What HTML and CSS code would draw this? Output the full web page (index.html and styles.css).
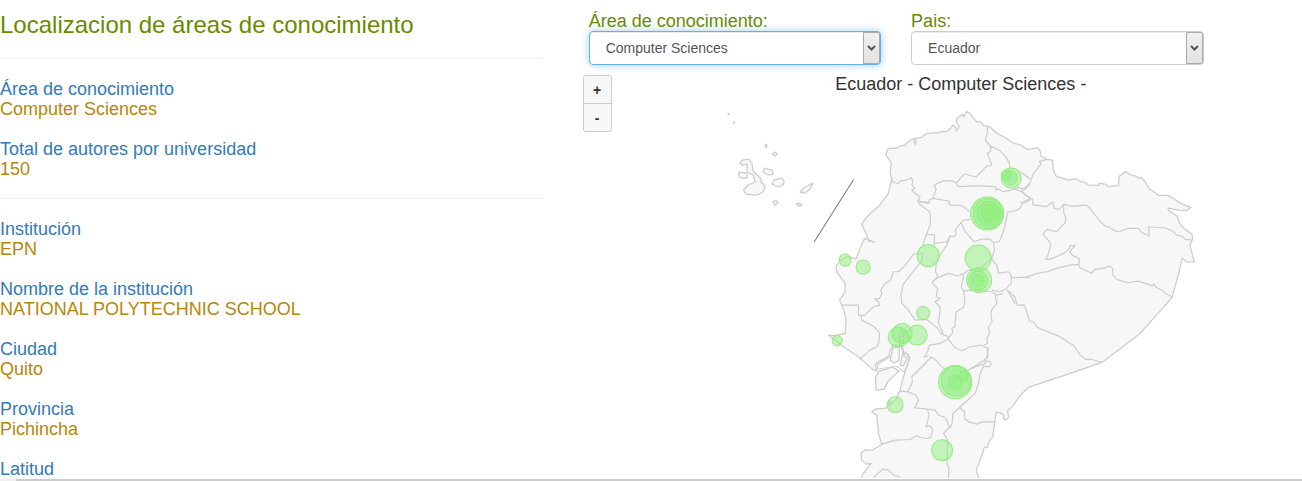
FILE: index.html
```html
<!DOCTYPE html>
<html lang="es">
<head>
<meta charset="utf-8">
<title>Localizacion de áreas de conocimiento</title>
<link rel="stylesheet" href="styles.css">
</head>
<body>
<main class="page">
  <section class="info">
    <h1 class="info-title">Localizacion de áreas de conocimiento</h1>
    <hr class="rule">
    <dl class="facts">
      <div><dt>Área de conocimiento</dt><dd>Computer Sciences</dd></div>
      <div><dt>Total de autores por universidad</dt><dd>150</dd></div>
    </dl>
    <hr class="rule">
    <dl class="facts">
      <div><dt>Institución</dt><dd>EPN</dd></div>
      <div><dt>Nombre de la institución</dt><dd>NATIONAL POLYTECHNIC SCHOOL</dd></div>
      <div><dt>Ciudad</dt><dd>Quito</dd></div>
      <div><dt>Provincia</dt><dd>Pichincha</dd></div>
      <div><dt>Latitud</dt></div>
    </dl>
  </section>

  <section class="explorer">
    <form class="filters">
      <div class="field">
        <label for="area">Área de conocimiento:</label>
        <div class="picker picker-active">
          <select id="area"><option>Computer Sciences</option></select>
          <span class="picker-arrow"><svg width="9" height="7" viewBox="0 0 9 7"><path d="M1 1l3.500 3.500L8 1"/></svg></span>
        </div>
      </div>
      <div class="field">
        <label for="country">Pais:</label>
        <div class="picker">
          <select id="country"><option>Ecuador</option></select>
          <span class="picker-arrow"><svg width="9" height="7" viewBox="0 0 9 7"><path d="M1 1l3.500 3.500L8 1"/></svg></span>
        </div>
      </div>
    </form>

    <div class="map">
      <div class="zoom">
        <button type="button" aria-label="Acercar">+</button>
        <button type="button" aria-label="Alejar">-</button>
      </div>
      <h2 class="map-title">Ecuador - Computer Sciences -</h2>
      <svg class="map-canvas" viewBox="583 94 719 384" role="img" aria-label="Mapa de Ecuador">
        <!-- mainland -->
        <path class="land" d="M890 148.3L896.7 148.3 900 146 905 145 909 141 914 138.5 921.7 137.3 926.7 133.3 938.3 132.7 941 131.5 946.7 131.7 951 127.7 952.7 125 955.7 128 956.3 131 959 126.7 956 121.7 957.3 118 962.7 114.3 963.5 117 966.7 111.3 970.7 114.3 973 118 976 121.3 980.7 122 983.3 125.7 987.7 126 991 128 996.7 133.3 1005 137.7 1013.3 143.3 1020 144.7 1026.7 149.3 1031 148.8 1037.3 147.6 1040 150.7 1040.7 155.7 1046.7 159.3 1052.3 160 1053.3 170.7 1056 176 1062 178 1068.3 180 1075.7 178.5 1080 181.7 1084 182 1088.3 185 1098.3 185.3 1099 183 1105 184 1108.3 186.7 1118.3 185.3 1119 176 1121.7 174.5 1125.3 171.5 1130 174.7 1136 176 1138 178 1141.3 177.7 1145 182 1149.3 188.7 1158.3 195.3 1167.3 195.3 1174 199 1180 203.3 1190.7 207.3 1186.7 210.3 1178.3 210 1167.7 208 1168.7 211 1176.7 216 1179 222 1181.7 226.7 1188.3 231.7 1192 235 1192.3 239.3 1189.7 245 1192 254 1194 261.7 1186.7 262 1182 258.3 1178 275 1171.7 297.5 1139.3 334 1101.7 362.3 1065 375 1040 383.3 1028.3 387.3 1020 395 1013.3 405 1007.3 411 1008.7 416.7 1005.7 419.7 1003 418.5 1003.7 415 1000 412.5 996 412.3 994.7 421.7 993 433 992.7 436.7 989 441 987.3 447 984 447.3 982.3 453.3 979.3 461.7 976 470 978.3 477V484H862V475L871 463.3 866.7 464 861.3 460 861 452.7 865 449.7 871.7 450.3 881.7 444 878.3 433.3 876.7 415 871.7 411.7 875 409 886.7 407.7 889 400 891 403 896 399 900 390 902 381 905 371.7 909.5 358 908 354 905 353 904 356 902.5 346 899 345 893 345 890 350 889 356 876.7 363 875 366 877 371 872 369 858.3 356.7 843.3 346.7 832 338 828.3 335 835 335.5 845 333.3 846 320 844 311 840.7 303.3 839.5 300 845 291.7 845 283.3 841 278 836.7 271.7 836 266 841 260 846.7 256.7 851 257.5 856 258.7 860 248.3 864.3 238.3 874 242 868.3 240.7 865.7 232.7 861.7 224.3 865 219 870 213.3 878.3 206.7 888.3 193.3 891.7 178.3 890 172 891 163 886 155 887.5 149Z"/>

        <!-- gulf channels and islands -->
        <path class="water" d="M909 359L905 352 903 357 901 346 898 347 898 352 894 354 890 357 878 364 877 369 897 366 904 372Z"/>
        <path class="land" d="M899 371L892 367 879 371 875.5 377 876 390 884 389 888 381Z"/>
        <path class="land" d="M891 356L890 360 894 363 899 360 899 347 893 347ZM902 355L905 356 907 359 903 366 900 365Z"/>
        <path class="land" d="M740 163L742 160 749 159 752 164 753 171 761 179 761 182 765 186 763 192 757 195 746 194 743.500 190 748 185 755 182 753 175 747 172 747 164 742 165Z"/>
        <path class="land" d="M739 172L747 173 747 178 741 178 738.500 175ZM764 168L772 170 773 174 768 175 763 172ZM774 180L781 178 784 181 783 185 778 187 772 184ZM800 192L805 187 813 183 810 189 805 193ZM772 154L775 152 777 154 775 156ZM773 202L776 200 778 203 775 205ZM796 204L799 203 802 205 799 206ZM765 144L767 145 766 148Z"/>
        <path class="land" d="M728 113.500h1v1h-1zM733.500 122h1v1h-1z"/>

        <!-- northern provinces -->
        <g class="border" transform="translate(850 100) scale(.33333)">
          <path d="M190 115L196 135 197 118M124 238L130 246 145 251 150 243 168 240 184 233 188 245 185 255 195 265 185 270 198 283 210 290 203 303 235 310 238 300 248 295 258 268 252 258 262 250 280 242 310 243 318 250 342 222 378 231 408 200 425 195 412 160 421 154 422 138M412 78L411 100 405 120 421 138 450 152 468 172 478 190 479 205M318 252L325 260 380 257 435 260 438 270 442 266 460 275 475 272 505 262 525 268 540 250M490 265L515 275 528 287 540 292"/>
        </g>
        <!-- central highlands -->
        <g class="border" transform="translate(900 190) scale(.33333)">
          <path d="M100 25L147 33 148 45 183 46 210 65M210 88L190 90 183 97 165 120 168 132 160 140 150 138 140 155 115 158 102 162 103 135 80 133M53 33L65 35 90 38M53 33L58 42 88 65 91 75 90 105 78 135 68 165M183 97L195 125 222 155 245 147 270 147 280 158 297 155 310 125 320 80 322 66 345 62 360 55 365 42 390 30M280 158L283 180 275 205 235 240M275 207L290 225 295 250 325 245 334 258 333 280 315 298 300 305 275 300M150 138L140 165 118 198 108 220 106 245 112 257M95 275L115 262 145 250 170 257 190 252 205 240 235 240M190 255L188 270 183 290 190 303 215 300 275 305 290 315 310 310M334 262L390 263M320 298L345 340"/>
        </g>
        <!-- Amazon provinces -->
        <g class="border" transform="translate(1020 130) scale(.33333)">
          <path d="M80 88L58 94 62 102 40 130 33 148 28 160 5 185 30 205 38 208 38 224 78 230 98 216 102 235 117 238 131 222 130 245 137 265 133 280 120 292 110 305 80 298 68 313 88 335 91 345 85 370 77 388 90 388 130 370 145 358 150 347 165 346 148 365 160 378 178 386 176 403 180 414 215 430 222 418 245 415 270 408 277 415 278 435 290 448 320 458 355 453 385 463 395 468 400 462 410 473 430 482 435 490 455 500M131 222L155 228 195 225 205 230 240 275 257 290 265 290 280 300 295 305 325 295 355 295 362 305 370 310 387 318 385 290 420 293 435 293 460 305 468 315 485 318 495 328 517 330M0 442L18 442 50 430 80 425 110 415 150 405 175 403M0 125L30 147M30 207L0 218"/>
        </g>
        <g class="border" transform="translate(980 210) scale(.33333)">
          <path d="M87 243L103 260 112 285 133 285 148 332 162 338 172 352 235 378 282 408 300 435 318 448 335 448 365 457"/>
        </g>
        <!-- coastal provinces -->
        <g class="border" transform="translate(820 220) scale(.33333)">
          <path d="M308 100L280 103 255 135 235 155 219 155 212 180 195 190 182 210 185 222 178 235 163 237 175 245 178 255 160 260 133 286 115 285 115 255 65 255M122 286L124 300 160 318 178 338 177 365 170 380 150 390 118 418M308 100L306 120 270 165 248 195 243 225 245 250 265 270 285 300 320 298 350 322 365 342 383 349 383 360M335 187L352 205 348 230 360 235 345 245 360 262 355 310 368 335 366 345M335 187L354 168M430 208L434 245 430 262 408 275 404 320 395 325 398 338 383 355M383 357L360 370 328 375 322 395 312 410 325 408M383 355L405 383 425 392 450 380 485 375M525 225L530 250 515 268 512 282 516 305 505 320 508 340 500 355 502 370 488 377 503 385 503 410 493 420M245 320L238 345 243 380M262 318L248 335 250 370M260 330L250 350"/>
        </g>
        <!-- southern provinces -->
        <g class="border" transform="translate(820 330) scale(.33333)">
          <path d="M330 80L345 88 375 120M335 80L275 140 277 155 263 185 240 182M263 185L287 195 295 210 283 233 315 236 345 240 355 255 375 262 382 275 387 292 370 310 383 330 380 400 386 412 385 442M503 52L500 85 470 105 445 120M455 115L470 108 495 100 495 92 510 95 513 102 508 110 490 108 482 125 472 170 465 190 418 232M418 232L398 250 396 280 388 295M418 232L433 245 433 265 445 275 470 282 485 275 525 275M321 236L327 255 318 290 330 287 338 298 332 320 325 325 300 322 290 317 270 328 225 330 185 342M160 442L188 417 205 420 220 435 240 440M203 215L208 228 218 218"/>
        </g>

        <path class="inset" d="M853.500 179.500L814 242"/>

        <g class="bubble">
          <circle cx="1011" cy="178" r="10"/><circle cx="1006" cy="175" r="5"/><circle cx="1010" cy="178" r="7"/>
          <circle cx="987" cy="213.500" r="16.500"/><circle cx="988" cy="213.500" r="15"/><circle cx="989" cy="213.500" r="12"/><circle cx="990" cy="213" r="9"/>
          <circle cx="928" cy="255.500" r="11"/><circle cx="978" cy="258" r="13"/>
          <circle cx="979" cy="280" r="12.500"/><circle cx="978" cy="280.500" r="9.500"/><circle cx="978" cy="280.500" r="6"/>
          <circle cx="845" cy="260" r="6"/><circle cx="863" cy="267" r="7"/>
          <circle cx="923" cy="313" r="6.500"/><circle cx="837" cy="340.500" r="5"/>
          <circle cx="898" cy="337" r="10"/><circle cx="902" cy="333.500" r="10"/><circle cx="917" cy="335" r="10"/>
          <circle cx="955" cy="382" r="16.500"/><circle cx="956" cy="381" r="15"/><circle cx="955" cy="382" r="7"/><circle cx="963" cy="376" r="5"/>
          <circle cx="895" cy="404.500" r="8"/><circle cx="942" cy="450" r="10.500"/>
        </g>
      </svg>
    </div>
  </section>
</main>
<div class="scroll-track"><div class="scroll-thumb"></div></div>
</body>
</html>
```
FILE: styles.css
```css
* {
  box-sizing: border-box;
}

body {
  margin: 0;
  background: #fff;
  color: #333;
  font-family: "Liberation Sans", Arial, sans-serif;
  font-size: 14px;
  line-height: 20px;
}

.page {
  display: grid;
  grid-template-columns: 43fr 57fr;
  column-gap: 40px;
  overflow: hidden;
}

.info-title {
  margin: 12px 0 0;
  color: #698b00;
  font-size: 24px;
  font-weight: 400;
  line-height: 26px;
}

.rule {
  margin: 19px 0 20px;
  border: 0;
  border-top: 1px solid #eee;
}

.info-title + .rule {
  margin-top: 20px;
}

.facts {
  display: grid;
  gap: 20px;
  margin: 0;
  font-size: 18px;
}

.facts dt {
  color: #337ab7;
}

.facts dd {
  margin: 0;
  color: #b8860b;
}

.explorer {
  min-width: 0;
}

.filters {
  display: flex;
  gap: 30px;
  padding: 12px 0 0 6px;
}

.field {
  flex: 0 0 41%;
}

.field label {
  display: block;
  color: #698b00;
  font-size: 18px;
  line-height: 19px;
}

.picker {
  position: relative;
}

.picker select {
  display: block;
  width: 100%;
  height: 34px;
  padding: 0 32px 0 16px;
  appearance: none;
  border: 1px solid #ccc;
  border-radius: 4px;
  background: #fff;
  box-shadow: inset 0 1px 1px rgba(0, 0, 0, .075);
  color: #555;
  font-family: inherit;
  font-size: 14px;
}

.picker-active select {
  border-color: #66afe9;
  box-shadow: inset 0 1px 1px rgba(0, 0, 0, .075), 0 0 8px rgba(102, 175, 233, .6);
}

.picker-arrow {
  position: absolute;
  top: 1px;
  right: 1px;
  bottom: 1px;
  display: grid;
  place-items: center;
  width: 17px;
  border: 1px solid #aaa;
  border-radius: 0 2px 2px 0;
  background: linear-gradient(#f0f0f0, #e3e3e3);
  pointer-events: none;
}

.picker-arrow path {
  fill: none;
  stroke: #555;
  stroke-width: 2;
}

.map {
  position: relative;
  padding-top: 9px;
}

.map-title {
  margin: 0;
  padding-left: 37px;
  font-size: 18px;
  font-weight: 400;
  line-height: 20px;
  text-align: center;
}

.zoom {
  position: absolute;
  top: 10px;
  left: 0;
  display: flex;
  flex-direction: column;
  border: 1px solid #ccc;
  border-radius: 3px;
  overflow: hidden;
}

.zoom button {
  width: 27px;
  height: 28px;
  padding: 0;
  border: 0;
  background: #f7f7f7;
  color: #333;
  font-family: inherit;
  font-size: 14px;
  font-weight: 700;
}

.zoom button:first-child {
  height: 27px;
}

.zoom button + button {
  border-top: 1px solid #ccc;
}

.map-canvas {
  display: block;
  width: 100%;
  height: auto;
}

.land {
  fill: #f7f7f7;
  stroke: #ccc;
  stroke-width: 1.25;
  stroke-linejoin: round;
}

.water {
  fill: #fff;
  stroke: #ccc;
  stroke-linejoin: round;
}

.border path {
  fill: none;
  stroke: #ccc;
  stroke-width: 3.6;
  stroke-linejoin: round;
}

.inset {
  fill: none;
  stroke: #777;
}

.bubble circle {
  fill: #90ed7d;
  fill-opacity: .5;
  stroke: #90ed7d;
}

.scroll-track {
  padding-left: 16px;
  background: #f0f0f0;
}

.scroll-thumb {
  height: 2px;
  background: #ccc;
}
```
